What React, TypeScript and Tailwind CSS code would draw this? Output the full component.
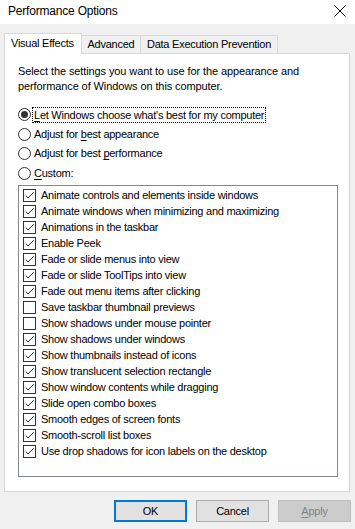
import React from "react";

const items: [string, boolean][] = [
  ["Animate controls and elements inside windows", true],
  ["Animate windows when minimizing and maximizing", true],
  ["Animations in the taskbar", true],
  ["Enable Peek", true],
  ["Fade or slide menus into view", true],
  ["Fade or slide ToolTips into view", true],
  ["Fade out menu items after clicking", true],
  ["Save taskbar thumbnail previews", false],
  ["Show shadows under mouse pointer", false],
  ["Show shadows under windows", true],
  ["Show thumbnails instead of icons", true],
  ["Show translucent selection rectangle", true],
  ["Show window contents while dragging", true],
  ["Slide open combo boxes", true],
  ["Smooth edges of screen fonts", true],
  ["Smooth-scroll list boxes", true],
  ["Use drop shadows for icon labels on the desktop", true],
];

function Radio({ checked }: { checked?: boolean }) {
  return (
    <svg width="13" height="13" viewBox="0 0 13 13" className="shrink-0">
      <circle cx="6.5" cy="6.5" r="6" fill="#fff" stroke="#333" strokeWidth="1" />
      {checked && <circle cx="6.5" cy="6.5" r="3.5" fill="#333" />}
    </svg>
  );
}

function Check({ checked }: { checked: boolean }) {
  return (
    <svg width="13" height="13" viewBox="0 0 13 13" className="shrink-0">
      <rect x="0.5" y="0.5" width="12" height="12" fill="#fff" stroke="#333" strokeWidth="1" />
      {checked && (
        <polyline points="2.5,6.5 5,9 10.5,3.5" fill="none" stroke="#333" strokeWidth="1" />
      )}
    </svg>
  );
}

export default function App() {
  return (
    <div
      className="w-[355px] h-[529px] bg-[#f0f0f0] text-black text-[11px] tracking-[-0.25px] leading-[15px] overflow-hidden flex flex-col"
      style={{ fontFamily: '"Liberation Sans", Arial, sans-serif' }}
    >
      {/* title bar */}
      <div className="h-[24px] bg-white flex items-center justify-between pl-[8px] pr-[9px]">
        <span className="text-[12px] tracking-[-0.2px] leading-[16px] -mt-[3px] whitespace-nowrap">Performance Options</span>
        <svg width="12" height="12" viewBox="0 0 12 12" className="-mt-[3px]">
          <path d="M0.5 0.5 L11.5 11.5 M11.5 0.5 L0.5 11.5" stroke="#000" strokeWidth="1" />
        </svg>
      </div>

      {/* tabs */}
      <div className="mt-[9px] px-[4px] flex items-end h-[20px] relative z-10 whitespace-nowrap">
        <div className="h-[21px] -mb-[1px] w-[78px] bg-white border border-[#d9d9d9] border-b-0 flex items-center pl-[6px] pb-[2px]">
          Visual Effects
        </div>
        <div className="h-[18px] w-[59px] bg-[#f0f0f0] border border-[#d9d9d9] border-l-0 border-b-0 flex items-center justify-center">
          Advanced
        </div>
        <div className="h-[18px] w-[137px] bg-[#f0f0f0] border border-[#d9d9d9] border-l-0 border-b-0 flex items-center justify-center">
          Data Execution Prevention
        </div>
      </div>

      {/* panel */}
      <div className="mx-[4px] w-[346px] h-[439px] bg-white border border-[#d9d9d9] pl-[13px] pt-[10px]">
        <p className="leading-[15px] whitespace-nowrap tracking-[-0.1px]">
          Select the settings you want to use for the appearance and
          <br />
          performance of Windows on this computer.
        </p>
        <div className="mt-[11px] flex flex-col whitespace-nowrap">
          <div className="h-[19px] flex items-center gap-[2px]">
            <Radio checked />
            <span className="outline outline-1 outline-dotted outline-black px-[1px] leading-[14px]">
              <span className="underline underline-offset-2">L</span>et Windows choose what's best for my computer
            </span>
          </div>
          <div className="h-[20px] flex items-center gap-[3px]">
            <Radio />
            <span>
              Adjust for <span className="underline underline-offset-2">b</span>est appearance
            </span>
          </div>
          <div className="h-[19px] flex items-center gap-[3px]">
            <Radio />
            <span>
              Adjust for best <span className="underline underline-offset-2">p</span>erformance
            </span>
          </div>
          <div className="h-[20px] flex items-center gap-[3px]">
            <Radio />
            <span>
              <span className="underline underline-offset-2">C</span>ustom:
            </span>
          </div>
        </div>
        <div className="mt-[2px] w-[320px] h-[292px] border border-[#828790] pl-[4px] pt-[1px]">
          {items.map(([label, c]) => (
            <div key={label} className="h-[16px] flex items-center gap-[5px]">
              <Check checked={c} />
              <span className="whitespace-nowrap">{label}</span>
            </div>
          ))}
        </div>
      </div>

      {/* buttons */}
      <div className="mt-[8px] flex justify-end gap-[9px] pr-[4px]">
        <button className="w-[73px] h-[22px] bg-[#e1e1e1] border-2 border-[#0078d7] flex items-center justify-center">
          OK
        </button>
        <button className="w-[73px] h-[22px] bg-[#e1e1e1] border border-[#adadad] flex items-center justify-center">
          Cancel
        </button>
        <button className="w-[73px] h-[22px] bg-[#cccccc] border border-[#bfbfbf] text-[#838383] flex items-center justify-center">
          <span>
            <span className="underline underline-offset-2">A</span>pply
          </span>
        </button>
      </div>
    </div>
  );
}
